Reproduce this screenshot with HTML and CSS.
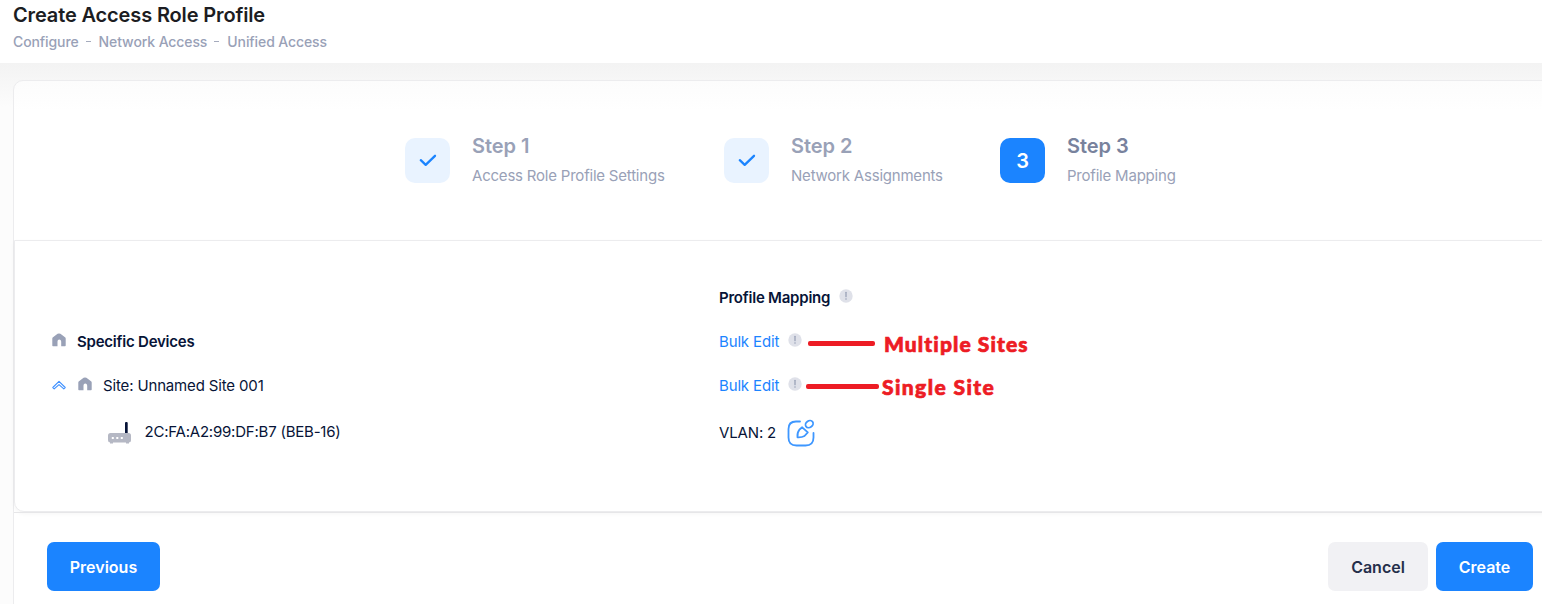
FILE: index.html
```html
<!DOCTYPE html>
<html lang="en">
<head>
<meta charset="utf-8">
<title>Create Access Role Profile</title>
<link rel="stylesheet" href="styles.css">
</head>
<body>
<svg class="defs" aria-hidden="true">
  <symbol id="home" viewBox="0 0 14 14"><path d="M1 13.3Q.3 13.3.3 12.5V5.5Q.3 4.700 1 4.200L5.600.8Q7 0 8.400.8L13 4.200Q13.700 4.700 13.700 5.500V12.500Q13.700 13.300 13 13.300H9.200V8.500Q9 6.400 7.300 6.400Q5.500 6.400 5.500 8.500V13.300Z" fill="#99a1b7"/></symbol>
  <symbol id="check" viewBox="0 0 20 16"><path d="M2.800 8.200 7.700 12.800 17 3.800" fill="none" stroke="#1b84ff" stroke-width="2.300" stroke-linecap="round" stroke-linejoin="round"/></symbol>
  <symbol id="info" viewBox="0 0 14 14"><circle cx="7" cy="7" r="6.700" fill="#dfe1e9"/><path d="M7 3.300V7.700" stroke="#99a1b7" stroke-width="1.300" stroke-linecap="round"/><circle cx="7" cy="10" r=".8" fill="#99a1b7"/></symbol>
</svg>
<header class="toolbar">
  <h1 class="title">Create Access Role Profile</h1>
  <nav class="crumbs"><span>Configure</span><i></i><span>Network Access</span><i></i><span>Unified Access</span></nav>
</header>
<main class="content">
  <section class="card">
    <div class="stepper">
      <div class="step"><div class="badge"><svg width="20" height="16"><use href="#check"/></svg></div><div><h3>Step 1</h3><p>Access Role Profile Settings</p></div></div>
      <div class="step step-two"><div class="badge"><svg width="20" height="16"><use href="#check"/></svg></div><div><h3>Step 2</h3><p>Network Assignments</p></div></div>
      <div class="step current"><div class="badge">3</div><div><h3>Step 3</h3><p>Profile Mapping</p></div></div>
    </div>
    <div class="panel">
      <div class="row"><div></div><div class="cell strong mapping">Profile Mapping<svg class="info" width="14" height="14"><use href="#info"/></svg></div></div>
      <div class="row">
        <div class="cell strong devices"><svg class="home" width="14" height="14"><use href="#home"/></svg>Specific Devices</div>
        <div class="cell"><a class="link">Bulk Edit</a><svg class="info" width="14" height="14"><use href="#info"/></svg><span class="note note-multiple"><b></b>Multiple Sites</span></div>
      </div>
      <div class="row">
        <div class="cell site">
          <svg class="chevron" width="14" height="10" viewBox="0 0 14 10"><path d="M.8 7.500 7 1.300 13.200 7.500 11.800 8.900 7 4.600 2.200 8.900Z" fill="none" stroke="#3e90ff" stroke-width="1.100" stroke-linejoin="round"/></svg>
          <svg class="home" width="14" height="14"><use href="#home"/></svg>Site: Unnamed Site 001</div>
        <div class="cell"><a class="link">Bulk Edit</a><svg class="info" width="14" height="14"><use href="#info"/></svg><span class="note note-single"><b></b>Single Site</span></div>
      </div>
      <div class="row device-row">
        <div class="cell device"><svg width="24" height="22" viewBox="0 0 24 22"><rect x="17" y="0" width="2.700" height="12" rx="1" fill="#071437"/><rect x="0" y="11" width="23" height="9.500" rx="2.500" fill="#b5b8c4"/><path d="M2 20h3v1.500H2zM18 20h3v1.500h-3z" fill="#b5b8c4"/><path d="M3.800 15h2v2h-2zM8.300 15h2v2h-2zM12.800 15h2v2h-2z" fill="#fff"/></svg><span>2C:FA:A2:99:DF:B7 (BEB-16)</span></div>
        <div class="cell vlan">VLAN: 2<svg class="edit" width="28" height="28" viewBox="0 0 28 28" fill="none" stroke="#3e97ff" stroke-width="1.800" stroke-linecap="round" stroke-linejoin="round"><path d="M13 2.500H9Q1.500 2.500 1.500 10V18.500Q1.500 26.500 9.500 26.500H18.500Q26.500 26.500 26.500 18.500V14"/><path d="M15.200 8.300 20.800 13.300 17.500 17Q15 18.500 10.500 18.300Q10 13.500 12.300 10.800Z"/><ellipse cx="22.300" cy="5.100" rx="3.300" ry="4" transform="rotate(55 22.300 5.100)"/></svg></div>
      </div>
    </div>
    <footer class="actions"><button class="primary previous">Previous</button><button class="cancel">Cancel</button><button class="primary create">Create</button></footer>
  </section>
</main>
</body>
</html>
```

FILE: styles.css
```css
* { box-sizing: border-box; }
body { margin: 0; height: 604px; overflow: hidden; font-family: Inter, sans-serif; font-size: 15px; letter-spacing: -.15px; color: #071437; background: #fff; }
h1, h3, p { margin: 0; }
svg { display: block; flex: none; }
.defs { position: absolute; width: 0; height: 0; }
.toolbar { height: 63px; padding: 3px 13px 0; background: #fff; }
.title { font-size: 20px; line-height: 24px; font-weight: 600; letter-spacing: -.14px; color: #1c1d22; white-space: nowrap; }
.crumbs { display: flex; align-items: center; margin-top: 4px; height: 20px; font-size: 14px; font-weight: 500; letter-spacing: -.1px; color: #99a1b7; }
.crumbs i { width: 5px; height: 1px; margin: 0 8px 0 7px; background: #a5abbd; }
.content { height: 541px; padding: 17px 0 0 13px; overflow: hidden; background: linear-gradient(#f3f3f3, #fcfcfc 44px); }
.card { width: 1545px; height: 540px; border: 1px solid #ececee; border-radius: 10px 0 0; background: linear-gradient(#fcfcfc, #fff 30px); }
.stepper { display: flex; height: 159px; padding: 53px 0 0 391px; }
.step { display: flex; width: 319px; gap: 22px; white-space: nowrap; color: #99a1b7; }
.step-two { width: 276px; }
.badge { display: flex; align-items: center; justify-content: center; width: 45px; height: 45px; margin-top: 4px; border-radius: 10px; background: #e9f3ff; font-size: 20px; font-weight: 600; color: #fff; }
.step h3 { line-height: 24px; font-size: 20px; font-weight: 600; letter-spacing: -.05px; margin-bottom: 8px; }
.badge svg { margin-top: -1px; }
.step p { line-height: 20px; font-size: 15px; letter-spacing: -.21px; }
.current .badge { background: #1b84ff; }
.current h3 { color: #78829d; }
.panel { height: 272px; padding: 34px 0 0; border: 1px solid #ececee; border-radius: 0 0 0 10px; background: #fff; box-shadow: 0 2px 4px rgba(0, 0, 0, .04); }
.row { display: grid; grid-template-columns: 704px 1fr; height: 44px; }
.device-row { height: 48px; }
.cell { position: relative; display: flex; align-items: center; white-space: nowrap; }
.strong { font-weight: 600; letter-spacing: -.22px; }
.devices { padding-left: 37px; gap: 11px; }
.site { padding-left: 37px; gap: 12px; }
.site .home { margin-right: -1px; }
.home { margin-top: -2px; }
.device { padding-left: 93px; gap: 12.5px; letter-spacing: -.22px; }
.device svg { margin-top: 3px; }
.info { margin: -3px 0 0 8.500px; }
.link { color: #1b84ff; }
.vlan { padding-top: 2px; }
.edit { margin: 2px 0 0 11px; }
.note { position: absolute; top: 14px; display: flex; align-items: center; font-family: Lato, sans-serif; font-weight: 900; font-size: 21px; letter-spacing: 1.100px; line-height: 22px; color: #ed1c24; -webkit-text-stroke: .7px #ed1c24; }
.note b { height: 5px; margin-top: -2px; border-radius: 2px; background: #ed1c24; }
.note-multiple { left: 89px; gap: 9px; }
.note-multiple b { width: 67px; }
.note-single { left: 87px; gap: 3px; top: 13px; letter-spacing: 1.400px; }
.note-single b { width: 73px; }
.actions { display: flex; padding: 29px 24px 0 33px; border-top: 1px solid #e6e6e8; }
button { height: 49px; padding: 2px 0 0; border: 0; border-radius: 7px; font: 600 16px/47px Inter, sans-serif; }
.primary { background: #1b84ff; color: #fff; }
.previous { width: 113px; margin-right: auto; }
.cancel { width: 100px; margin-right: 8px; background: #f1f1f4; color: #252f4a; }
.create { width: 97px; }
```
